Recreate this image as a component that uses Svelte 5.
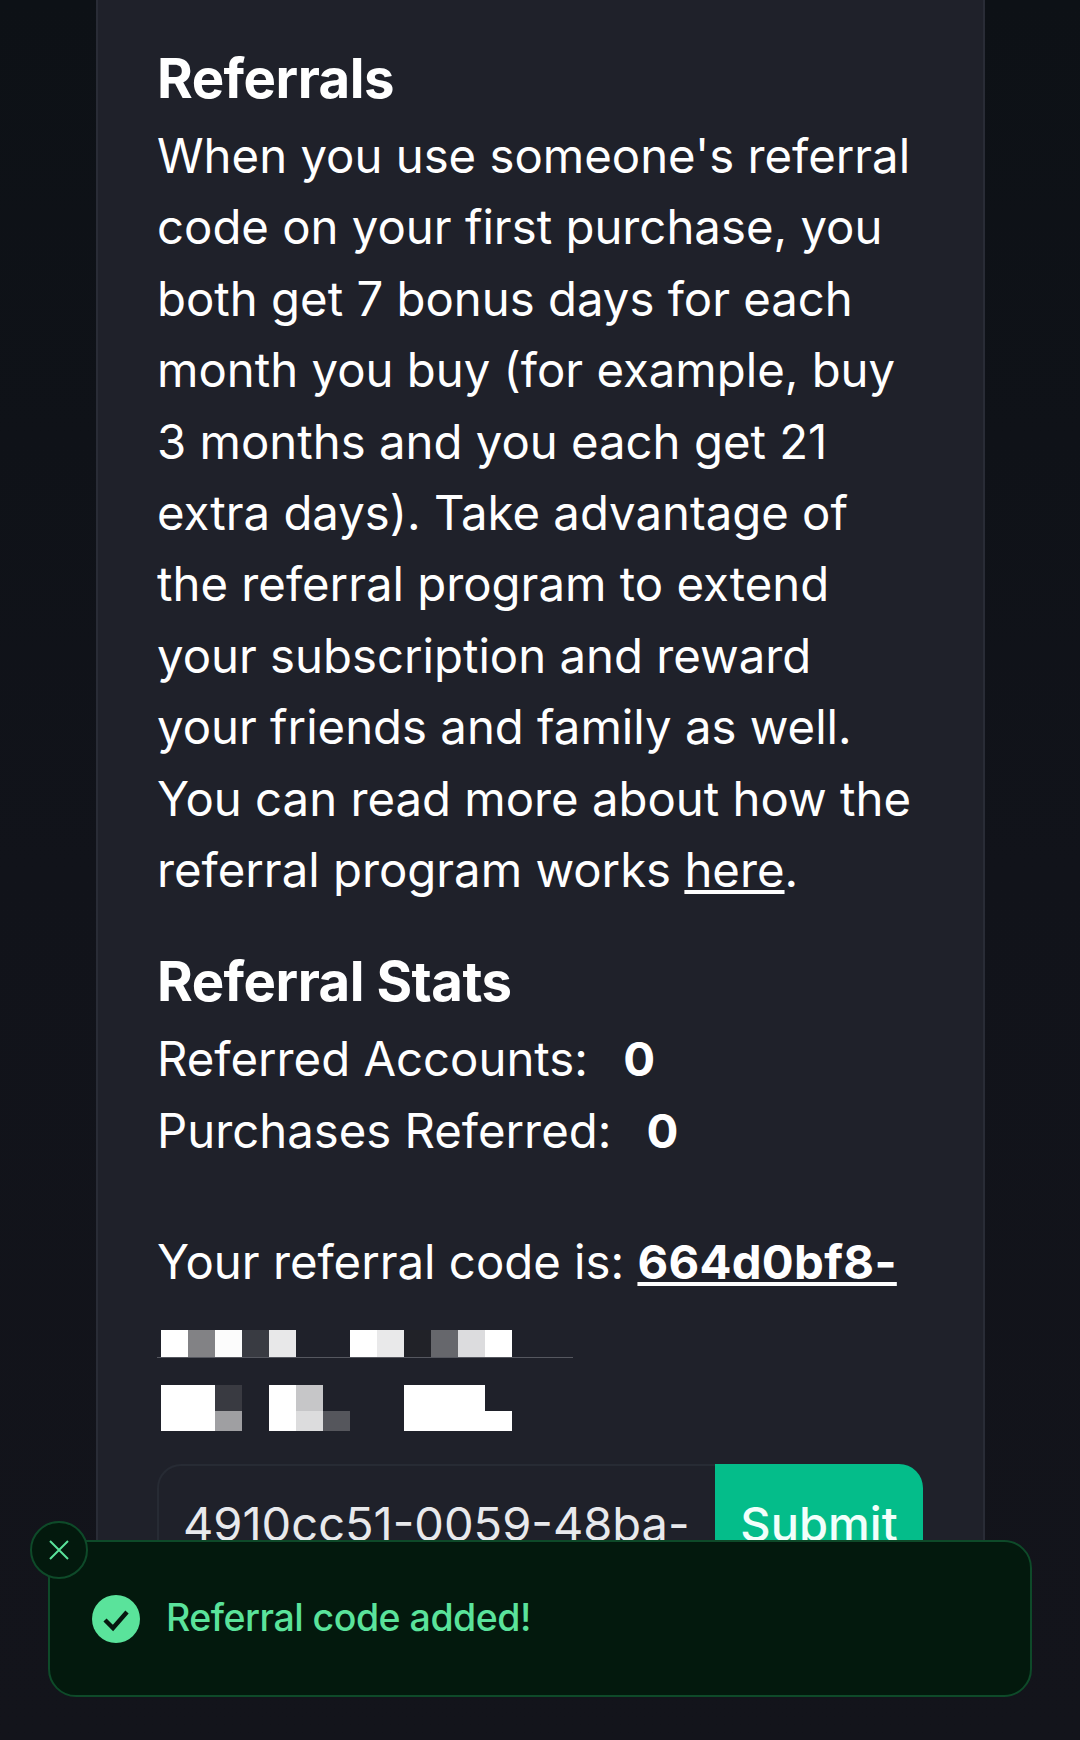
<script>
	// pixelated part of the referral code, one array per row
	const rowOne = ['#fff', '#828285', '#fcfcfc', '#393b42', '#e8e8e9', '', '', '#fff', '#e9e9ea', '#212228', '#66676c', '#dcdcde', '#fff']
	const rowTwo = ['#fff', '#fff', '#393a41', '', '#fff', '#c6c6c8', '', '', '', '#fff', '#fff', '#fff', '']
	const rowThree = ['#fff', '#fff', '#9f9fa2', '', '#fff', '#dcdcdd', '#55565c', '', '', '#fff', '#fff', '#fff', '#fff']
</script>

<div class="page">
	<main class="card">
		<h2>Referrals</h2>
		<p>
			When you use someone's referral code on your first purchase, you both get 7 bonus days for each month you buy (for example, buy 3 months and you each get 21 extra days). Take advantage of the referral program to extend your subscription and reward your friends and family as well. You can read more about how the referral program works <a href="#here">here</a>.
		</p>

		<h2 class="stats-title">Referral Stats</h2>
		<div class="stat">Referred Accounts: <b>0</b></div>
		<div class="stat">Purchases Referred: <b>0</b></div>

		<p class="code-line">Your referral code is: <a class="code" href="#code">664d0bf8-</a></p>

		<div class="blur">
			<div class="blur-row first">
				{#each rowOne as c}
					<i style="background: {c || 'transparent'}"></i>
				{/each}
			</div>
			<div class="blur-row second">
				{#each rowTwo as c}
					<i style="background: {c || 'transparent'}"></i>
				{/each}
			</div>
			<div class="blur-row third">
				{#each rowThree as c}
					<i style="background: {c || 'transparent'}"></i>
				{/each}
			</div>
		</div>

		<form class="redeem">
			<input type="text" value="4910cc51-0059-48ba-" />
			<button type="button">Submit</button>
		</form>
	</main>

	<div class="toast">
		<button class="close" type="button" aria-label="Close">
			<svg viewBox="0 0 24 24" width="24" height="24" fill="none" stroke="#5ae39b" stroke-width="2"><path d="M3 3l18 18M21 3L3 21" /></svg>
		</button>
		<svg class="check" viewBox="0 0 48 48" width="48" height="48"><circle cx="24" cy="24" r="24" fill="#5ae39b" /><path d="M13 25l8 8 14-16" fill="none" stroke="#07170f" stroke-width="4.4" /></svg>
		<span>Referral code added!</span>
	</div>
</div>

<style>
	:global(body) {
		margin: 0;
		background: #13141b;
	}
	.page {
		position: relative;
		height: 1740px;
		overflow: hidden;
		background: linear-gradient(#0d1116, #11131a 50%, #13141b);
		font-family: Inter, 'Liberation Sans', sans-serif;
		color: #fff;
	}
	.card {
		box-sizing: border-box;
		width: 889px;
		height: 1620px;
		margin-left: 96px;
		padding: 45px 59px 0;
		background: #1f212a;
		border-left: 2px solid #292c36;
		border-right: 2px solid #292c36;
	}
	h2 {
		margin: 0 0 9px;
		font-size: 54.5px;
		line-height: 66px;
		font-weight: 700;
		letter-spacing: -0.5px;
	}
	p {
		margin: 0;
		font-size: 47.3px;
		line-height: 71.4px;
		width: 763px;
	}
	a {
		color: inherit;
		text-decoration: underline;
	}
	.stats-title {
		margin-top: 43px;
	}
	.stat {
		font-size: 47.3px;
		line-height: 71.4px;
	}
	.stat b {
		margin-left: 22px;
		font-weight: 700;
	}
	.code-line {
		margin-top: 60px;
	}
	.code {
		font-weight: 700;
		letter-spacing: 0.3px;
	}
	.blur {
		margin-top: 32px;
		width: 416px;
	}
	.blur-row {
		display: grid;
		grid-template-columns: repeat(13, 27px);
		padding-left: 4px;
	}
	.blur-row.first {
		height: 27px;
		border-bottom: 1px solid #55575f;
		margin-bottom: 27px;
	}
	.blur-row.second {
		height: 26px;
	}
	.blur-row.third {
		height: 20px;
	}
	.redeem {
		display: flex;
		margin-top: 33px;
		width: 766px;
		height: 120px;
	}
	.redeem input {
		flex: 1;
		min-width: 0;
		box-sizing: border-box;
		padding: 0 24px 0 24px;
		border: 2px solid #272b34;
		border-right: 0;
		border-radius: 24px 0 0 24px;
		background: transparent;
		color: #e8e9ec;
		font: 47px Inter, sans-serif;
	}
	.redeem button {
		width: 208px;
		border: 0;
		border-radius: 0 24px 24px 0;
		background: #04bd8a;
		color: #f2fffb;
		font: 500 47px Inter, sans-serif;
	}
	.toast {
		position: absolute;
		left: 48px;
		top: 1540px;
		box-sizing: border-box;
		width: 984px;
		height: 157px;
		display: flex;
		align-items: center;
		gap: 26px;
		padding-left: 42px;
		background: #03190d;
		border: 2px solid #0e4a29;
		border-radius: 28px;
		color: #5ae39b;
		font-size: 37.5px;
		font-weight: 500;
		letter-spacing: -0.5px;
	}
	.toast span {
		margin-top: -2px;
	}
	.close {
		position: absolute;
		left: -20px;
		top: -21px;
		box-sizing: border-box;
		width: 58px;
		height: 58px;
		padding: 0;
		display: flex;
		align-items: center;
		justify-content: center;
		border-radius: 50%;
		border: 2px solid #0e4a29;
		background: #03190d;
	}
	.check {
		flex: none;
	}
</style>
